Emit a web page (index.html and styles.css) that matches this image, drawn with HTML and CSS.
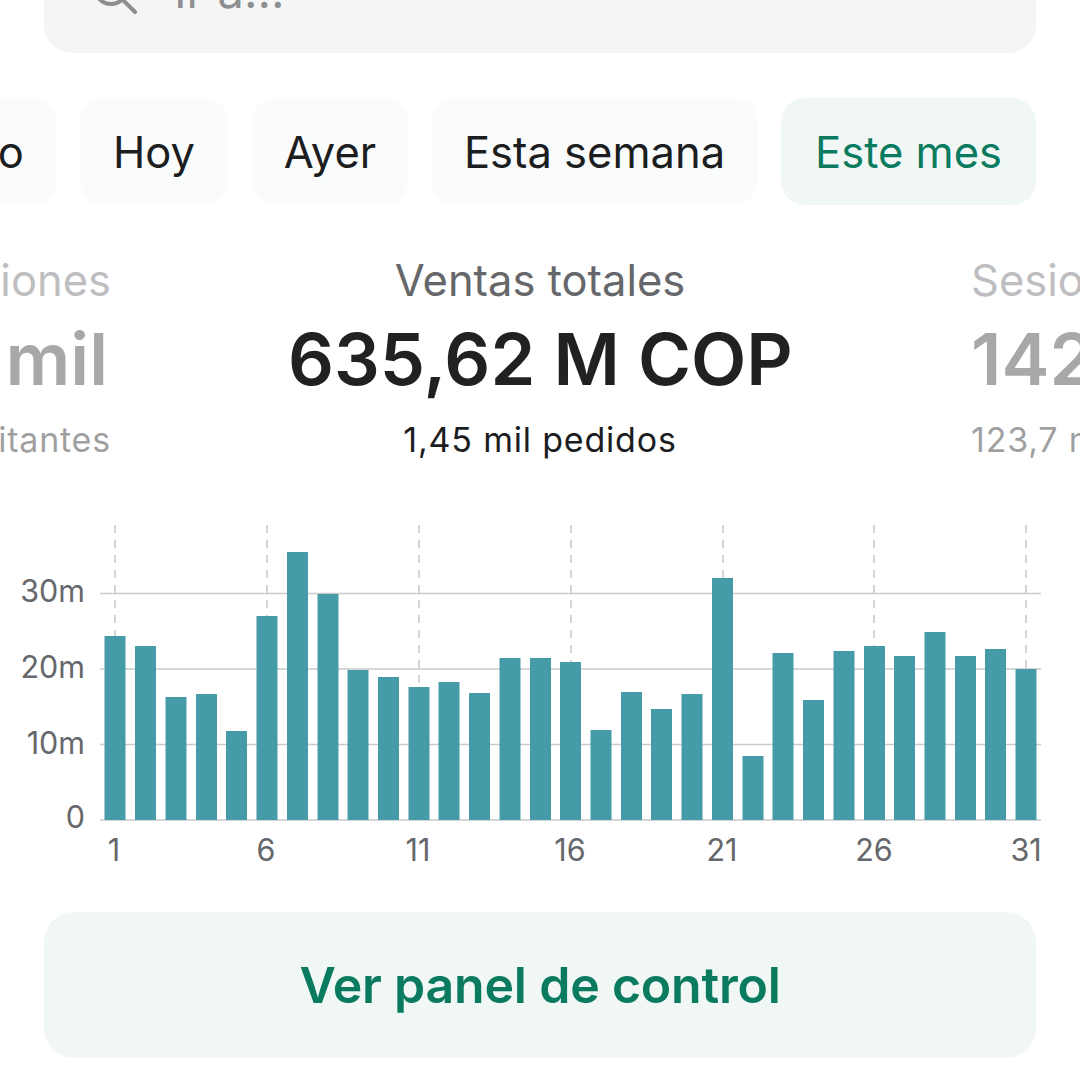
FILE: index.html
```html
<!DOCTYPE html>
<html lang="es">
<head>
<meta charset="utf-8"/>
<title>Panel</title>
<link rel="stylesheet" href="styles.css">
</head>
<body>
<div class="page">
  <div class="search">
    <svg class="search-icon" width="48" height="48" viewBox="0 0 48 48">
      <circle cx="20" cy="20" r="16"/>
      <line x1="32" y1="32" x2="44" y2="44"/>
    </svg>
    <span class="search-text">Ir a...</span>
  </div>

  <div class="chips">
    <div class="chip chip-first">Todo</div>
    <div class="chip chip-hoy">Hoy</div>
    <div class="chip chip-ayer">Ayer</div>
    <div class="chip chip-semana">Esta semana</div>
    <div class="chip chip-active">Este mes</div>
  </div>

  <div class="stats">
    <div class="stat stat-left">
      <div class="stat-label">Visualizaciones</div>
      <div class="stat-value">212 mil</div>
      <div class="stat-sub">87,3 mil visitantes</div>
    </div>
    <div class="stat stat-main">
      <div class="stat-label">Ventas totales</div>
      <div class="stat-value">635,62 M COP</div>
      <div class="stat-sub">1,45 mil pedidos</div>
    </div>
    <div class="stat stat-right">
      <div class="stat-label">Sesiones</div>
      <div class="stat-value">142 mil</div>
      <div class="stat-sub">123,7 mil visitantes</div>
    </div>
  </div>

  <svg class="chart" width="1080" height="360" viewBox="0 510 1080 360">
    <g class="grid">
      <line x1="100" y1="593.5" x2="1041" y2="593.5"/>
      <line x1="100" y1="669" x2="1041" y2="669"/>
      <line x1="100" y1="744.5" x2="1041" y2="744.5"/>
      <line x1="100" y1="820" x2="1041" y2="820"/>
    </g>
    <g class="ticks">
      <line x1="115" y1="525" x2="115" y2="820"/>
      <line x1="267" y1="525" x2="267" y2="820"/>
      <line x1="419" y1="525" x2="419" y2="820"/>
      <line x1="571" y1="525" x2="571" y2="820"/>
      <line x1="723" y1="525" x2="723" y2="820"/>
      <line x1="874" y1="525" x2="874" y2="820"/>
      <line x1="1026" y1="525" x2="1026" y2="820"/>
    </g>
    <g class="bars">
      <rect x="104.5" y="636" width="21" height="184"/>
      <rect x="135" y="646" width="21" height="174"/>
      <rect x="165.5" y="697" width="21" height="123"/>
      <rect x="196" y="694" width="21" height="126"/>
      <rect x="226" y="731" width="21" height="89"/>
      <rect x="256.5" y="616" width="21" height="204"/>
      <rect x="287" y="552" width="21" height="268"/>
      <rect x="317.5" y="594" width="21" height="226"/>
      <rect x="347.5" y="670" width="21" height="150"/>
      <rect x="378" y="677" width="21" height="143"/>
      <rect x="408.5" y="687" width="21" height="133"/>
      <rect x="438.5" y="682" width="21" height="138"/>
      <rect x="469" y="693" width="21" height="127"/>
      <rect x="499.5" y="658" width="21" height="162"/>
      <rect x="530" y="658" width="21" height="162"/>
      <rect x="560" y="662" width="21" height="158"/>
      <rect x="590.5" y="730" width="21" height="90"/>
      <rect x="621" y="692" width="21" height="128"/>
      <rect x="651" y="709" width="21" height="111"/>
      <rect x="681.5" y="694" width="21" height="126"/>
      <rect x="712" y="578" width="21" height="242"/>
      <rect x="742.5" y="756" width="21" height="64"/>
      <rect x="772.5" y="653" width="21" height="167"/>
      <rect x="803" y="700" width="21" height="120"/>
      <rect x="833.5" y="651" width="21" height="169"/>
      <rect x="864" y="646" width="21" height="174"/>
      <rect x="894" y="656" width="21" height="164"/>
      <rect x="924.5" y="632" width="21" height="188"/>
      <rect x="955" y="656" width="21" height="164"/>
      <rect x="985" y="649" width="21" height="171"/>
      <rect x="1015.5" y="669" width="21" height="151"/>
    </g>
    <g class="axis axis-y">
      <text x="85" y="602">30m</text>
      <text x="85" y="678">20m</text>
      <text x="85" y="754">10m</text>
      <text x="85" y="828">0</text>
    </g>
    <g class="axis axis-x">
      <text x="114" y="861">1</text>
      <text x="266" y="861">6</text>
      <text x="418" y="861">11</text>
      <text x="570" y="861">16</text>
      <text x="722" y="861">21</text>
      <text x="874" y="861">26</text>
      <text x="1026" y="861">31</text>
    </g>
  </svg>

  <div class="cta">Ver panel de control</div>
</div>
</body>
</html>
```

FILE: styles.css
```css
html, body {
  margin: 0;
  padding: 0;
  background: #fff;
}

.page {
  width: 1080px;
  height: 1080px;
  overflow: hidden;
  font-family: Inter, "Liberation Sans", sans-serif;
  color: #1c1d1f;
}

.search {
  box-sizing: border-box;
  margin: -47px 44px 0;
  height: 100px;
  background: #f5f5f6;
  border-radius: 28px;
  display: flex;
  align-items: flex-start;
  gap: 35px;
  padding: 12px 0 0 47px;
  color: #8d8e91;
  font-size: 47px;
  line-height: 52px;
}

.search-icon {
  flex: none;
  margin-top: 3px;
}
.search-icon circle, .search-icon line {
  fill: none;
  stroke: #8d8e91;
  stroke-width: 4px;
  stroke-linecap: round;
}

.chips {
  margin-top: 45px;
  height: 107px;
  display: flex;
  justify-content: flex-end;
  gap: 23px;
  padding-right: 44px;
}

.chip {
  flex: none;
  box-sizing: border-box;
  display: flex;
  align-items: center;
  justify-content: center;
  background: #fafbfb;
  border-radius: 24px;
  font-size: 43.5px;
}
.chip-first { width: 170px; }
.chip-hoy { width: 148px; margin-right: 1px; }
.chip-ayer { width: 156px; }
.chip-semana { width: 327px; }
.chip-active {
  width: 255px;
  background: #f1f7f5;
  color: #0a7b5e;
}

.stats {
  margin-top: 50px;
  display: flex;
  justify-content: center;
  gap: 179px;
  white-space: nowrap;
}

.stat {
  flex: none;
  width: 400px;
  opacity: 0.42;
}
.stat-left {
  width: 402px;
  margin-right: -2px;
  text-align: right;
}
.stat-right { text-align: left; }
.stat-main {
  width: 504px;
  text-align: center;
  opacity: 1;
}

.stat-label {
  font-size: 43.5px;
  line-height: 50px;
  color: #66676b;
}
.stat-value {
  margin-top: 10px;
  padding-right: 3px;
  font-size: 72px;
  line-height: 88px;
  font-weight: 600;
  color: #1f2123;
}
.stat-left .stat-value, .stat-right .stat-value {
  color: #333;
}
.stat-sub {
  margin-top: 16px;
  font-size: 34px;
  line-height: 42px;
  letter-spacing: 0.8px;
}

.chart {
  display: block;
  margin-top: 49px;
}
.grid line {
  stroke: #c9cacb;
  stroke-width: 1.5px;
}
.ticks line {
  stroke: #c6c7c9;
  stroke-width: 1.5px;
  stroke-dasharray: 8 7;
}
.bars rect {
  fill: #459ca8;
}
.axis text {
  font-size: 30.5px;
  fill: #66676b;
}
.axis-y text { text-anchor: end; }
.axis-x text { text-anchor: middle; }

.cta {
  margin: 42px 44px 0;
  height: 146px;
  border-radius: 30px;
  background: #f1f7f5;
  color: #0a7b5e;
  display: flex;
  align-items: center;
  justify-content: center;
  font-size: 50px;
  font-weight: 600;
  letter-spacing: -0.2px;
}
```
